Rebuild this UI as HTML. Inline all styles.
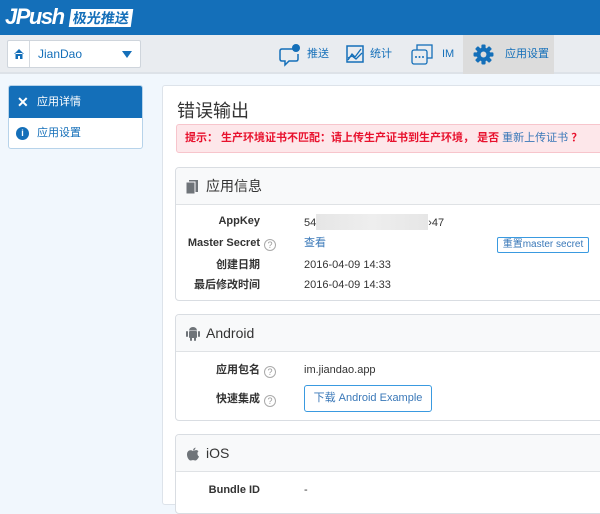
<!DOCTYPE html>
<html><head><meta charset="utf-8"><style>
*{margin:0;padding:0;box-sizing:border-box}
body{width:600px;height:490px;overflow:hidden;background:#f1f7fd;font-family:"Liberation Sans","Noto Sans CJK SC",sans-serif;font-size:12px;color:#333;position:relative}
.hdr{position:absolute;left:0;top:0;width:600px;height:35px;background:#146fb9}
.logo{position:absolute;left:5px;top:4px;color:#fff;font-size:22px;font-weight:bold;font-style:italic;letter-spacing:-1.5px}
.logo2{position:absolute;left:70px;top:9px;background:#fff;color:#146fb9;font-size:14px;font-weight:bold;padding:0 3px;height:18px;line-height:18px;transform:skewX(-8deg)}
.nav{position:absolute;left:0;top:35px;width:600px;height:39px;background:#e9ecf0;border-bottom:2px solid #dde2e8}
.sel{position:absolute;left:7px;top:5px;width:134px;height:28px;background:#fff;border:1px solid #cfd5dc;border-radius:2px}
.sel .h{position:absolute;left:0;top:0;width:22px;height:26px;border-right:1px solid #d5dae0}
.sel span{position:absolute;left:30px;top:6px;color:#146fb9;font-size:12px}
.sel .c{position:absolute;right:8px;top:10px;width:0;height:0;border-left:5px solid transparent;border-right:5px solid transparent;border-top:7px solid #146fb9}
.ni{position:absolute;top:13px;color:#146fb9;font-size:11px;line-height:13px}
.act{position:absolute;left:463px;top:0;width:91px;height:39px;background:#dcdcdc}
.side{position:absolute;left:8px;top:85px;width:135px;height:64px;border:1px solid #b7d3ea;border-radius:3px;background:#fff;overflow:hidden}
.side .a{height:32px;background:#146fb9;color:#fff;line-height:32px;padding-left:28px;font-size:11px;position:relative}
.side .b{height:31px;color:#146fb9;line-height:31px;padding-left:28px;font-size:11px;position:relative}
.main{position:absolute;left:162px;top:85px;width:450px;height:420px;background:#fff;border:1px solid #dde3ea;border-radius:3px}
.ttl{position:absolute;left:177px;top:97px;font-size:18px;color:#333}
.alert{position:absolute;left:176px;top:124px;width:430px;height:29px;background:#fde7ea;border:1px solid #f7c5cc;border-radius:3px;color:#e8112d;font-weight:bold;font-size:11px;line-height:27px;padding-left:8px}
.alert a{color:#3a78b8;font-weight:normal}
.pan{position:absolute;left:175px;width:440px;border:1px solid #d9dde2;border-radius:4px;background:#fff;overflow:hidden}
.pan .ph{height:37px;background:#f8f9fa;border-bottom:1px solid #dfe2e5;font-size:14px;color:#333;line-height:37px;padding-left:30px;position:relative}
.pan .ph svg{position:absolute;left:10px;top:12px}
.row{position:absolute;font-size:11px;height:14px;line-height:14px;width:440px}
.lb{position:absolute;top:0;right:356px;font-weight:bold;white-space:nowrap}
.lb.w{right:340px}
.vl{position:absolute;top:0;left:128px;white-space:nowrap}
.q{display:inline-block;width:12px;height:12px;border:1px solid #aaa;border-radius:50%;color:#999;font-size:9px;text-align:center;line-height:10px;font-weight:normal;margin-left:4px;vertical-align:-2px}
</style></head><body>
<div class="hdr"><div class="logo">JPush</div><div class="logo2">极光推送</div></div>
<div class="nav">
 <div class="sel"><div class="h"><svg width="22" height="26"><path d="M6 13 L11 8 L16 13 M7.5 12 V18 H10 V15 H12 V18 H14.5 V12" fill="#146fb9"/></svg></div><span>JianDao</span><div class="c"></div></div>
 <svg style="position:absolute;left:278px;top:8px" width="24" height="24"><path d="M4 6 H15 M4 6 Q2 6 2 8 V16 Q2 18 4 18 H7 V22 L11 18 H18 Q20 18 20 16 V11" fill="none" stroke="#146fb9" stroke-width="1.5"/><circle cx="18" cy="5" r="4" fill="#146fb9"/></svg>
 <div class="ni" style="left:307px">推送</div>
 <svg style="position:absolute;left:346px;top:10px" width="18" height="18"><rect x="1" y="1" width="16" height="16" fill="none" stroke="#146fb9" stroke-width="1.5"/><path d="M2 15 L6 9 L9 12 L15 4 M2 13 L6 11 L10 14 L16 8" fill="none" stroke="#146fb9" stroke-width="1.3"/></svg>
 <div class="ni" style="left:370px">统计</div>
 <svg style="position:absolute;left:411px;top:9px" width="22" height="22"><rect x="6" y="1" width="15" height="13" fill="#e9ecf0" stroke="#146fb9" stroke-width="1.3"/><rect x="1" y="6" width="15" height="14" rx="2" fill="#e9ecf0" stroke="#146fb9" stroke-width="1.3"/><circle cx="5" cy="13" r="1" fill="#146fb9"/><circle cx="8.5" cy="13" r="1" fill="#146fb9"/><circle cx="12" cy="13" r="1" fill="#146fb9"/></svg>
 <div class="ni" style="left:442px">IM</div>
 <div class="act"><svg style="position:absolute;left:10px;top:9px" width="21" height="21" viewBox="0 0 20 20"><g fill="#146fb9"><circle cx="10" cy="10" r="6.5"/><rect x="8" y="0.5" width="4" height="19" rx="1"/><rect x="8" y="0.5" width="4" height="19" rx="1" transform="rotate(45 10 10)"/><rect x="8" y="0.5" width="4" height="19" rx="1" transform="rotate(90 10 10)"/><rect x="8" y="0.5" width="4" height="19" rx="1" transform="rotate(135 10 10)"/></g><circle cx="10" cy="10" r="2.8" fill="#dcdcdc"/></svg><div class="ni" style="left:42px">应用设置</div></div>
</div>
<div class="side">
 <div class="a"><span style="position:absolute;left:8px;top:0;font-size:14px;font-weight:bold">✕</span>应用详情</div>
 <div class="b"><span style="position:absolute;left:7px;top:9px;width:13px;height:13px;border-radius:50%;background:#146fb9;color:#fff;font-size:9px;line-height:13px;text-align:center;font-weight:bold">i</span>应用设置</div>
</div>
<div class="main"></div>
<div class="ttl">错误输出</div>
<div class="alert">提示： 生产环境证书不匹配：请上传生产证书到生产环境， 是否 <a>重新上传证书</a> ？</div>

<div class="pan" style="top:167px;height:134px">
 <div class="ph"><svg width="14" height="14"><rect x="3" y="0" width="9" height="12" fill="#6f7479"/><rect x="0" y="2" width="9" height="12" fill="#6f7479" stroke="#f8f9fa"/></svg>应用信息</div>
 <div class="row" style="top:46px"><div class="lb">AppKey</div><div class="vl">54<span style="display:inline-block;width:112px;height:16px;background:linear-gradient(90deg,#e6e6e6,#eee,#e6e6e6);vertical-align:-4px"></span>›47</div></div>
 <div class="row" style="top:68px"><div class="lb w">Master Secret<span class="q">?</span></div><div class="vl" style="color:#3a78b8">查看</div><div style="position:absolute;left:321px;top:1px;width:92px;height:16px;border:1px solid #3a9ae0;border-radius:2px;color:#3a78b8;font-size:10px;text-align:center;line-height:14px">重置master secret</div></div>
 <div class="row" style="top:90px"><div class="lb">创建日期</div><div class="vl">2016-04-09 14:33</div></div>
 <div class="row" style="top:110px"><div class="lb">最后修改时间</div><div class="vl">2016-04-09 14:33</div></div>
</div>

<div class="pan" style="top:314px;height:107px">
 <div class="ph"><svg width="14" height="14"><rect x="3" y="4" width="8" height="7" rx="1" fill="#6f7479"/><path d="M3 3.5 A4 3.5 0 0 1 11 3.5Z" fill="#6f7479"/><rect x="0" y="4" width="2" height="6" rx="1" fill="#6f7479"/><rect x="12" y="4" width="2" height="6" rx="1" fill="#6f7479"/><rect x="4" y="10" width="2" height="4" rx="1" fill="#6f7479"/><rect x="8" y="10" width="2" height="4" rx="1" fill="#6f7479"/></svg>Android</div>
 <div class="row" style="top:48px"><div class="lb w">应用包名<span class="q">?</span></div><div class="vl">im.jiandao.app</div></div>
 <div class="row" style="top:77px"><div class="lb w">快速集成<span class="q">?</span></div><div style="position:absolute;left:128px;top:-7px;width:128px;height:27px;border:1px solid #3a9ae0;border-radius:3px;color:#3a78b8;font-size:11px;text-align:center;line-height:25px">下载 Android Example</div></div>
</div>

<div class="pan" style="top:434px;height:80px">
 <div class="ph"><svg width="14" height="14"><path d="M7 4 C5 2.5 1 3 1 7.5 C1 11 3.5 14 5 13.5 C6 13 8 13 9 13.5 C10.5 14 12.5 11 13 9.5 C11 8.5 11 5 12.5 4.3 C11 2.5 9 3.2 7 4Z M7 3.5 C7 2 8 1 9.5 0.5 C9.5 2 8.5 3.3 7 3.5Z" fill="#6f7479"/></svg>iOS</div>
 <div class="row" style="top:48px"><div class="lb">Bundle ID</div><div class="vl">-</div></div>
</div>
</body></html>
